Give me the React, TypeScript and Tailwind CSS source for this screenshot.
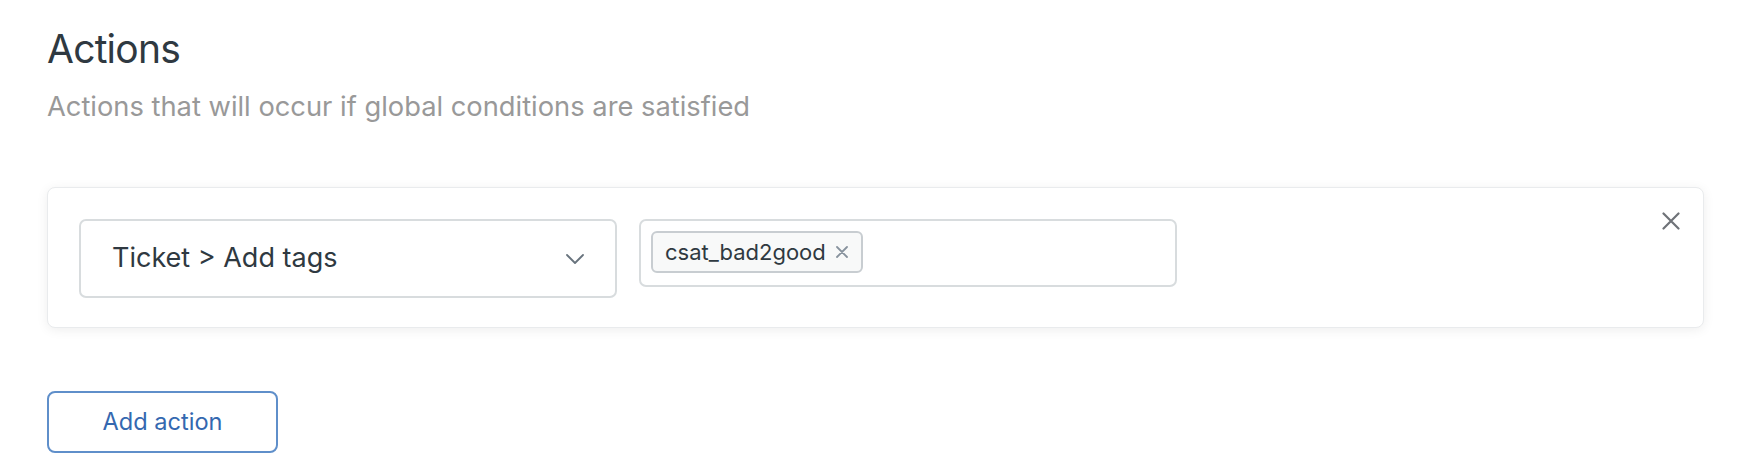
import React from "react";

export default function App() {
  return (
    <div
      className="w-[1740px] h-[476px] bg-white pl-[47px] pr-[36px] pt-[25px]"
      style={{ fontFamily: "Inter, 'Noto Sans', sans-serif" }}
    >
      <h1 className="text-[39px] leading-[48px] tracking-[-0.02em] text-[#2f3941] font-normal">Actions</h1>
      <p className="mt-[16px] text-[27.3px] leading-[36px] text-[#999999]">
        Actions that will occur if global conditions are satisfied
      </p>

      <div className="relative mt-[62px] h-[141px] rounded-[8px] border border-[#e9ebed] bg-white shadow-[0_2px_12px_rgba(0,0,0,0.07)] p-[31px] flex items-start gap-[22px]">
        <div className="w-[538px] h-[79px] rounded-[7px] border-2 border-[#d8dcde] flex items-center justify-between pl-[31px] pr-[31px]">
          <span className="text-[27px] text-[#2f3941]">Ticket &gt; Add tags</span>
          <svg width="18" height="10" viewBox="0 0 18 10" fill="none">
            <path d="M1 1l8 8 8-8" stroke="#68737d" strokeWidth="1.8" strokeLinecap="round" strokeLinejoin="round" />
          </svg>
        </div>
        <div className="w-[538px] h-[68px] rounded-[7px] border-2 border-[#d8dcde] pl-[10px] pt-[10px]">
          <div className="inline-flex items-center h-[42px] rounded-[6px] border-2 border-[#c8cdd1] bg-[#f8f9f9] pl-[12px] pr-[13px] gap-[10px]">
            <span className="text-[22px] text-[#2f3941]">csat_bad2good</span>
            <svg width="12" height="12" viewBox="0 0 12 12" fill="none">
              <path d="M1 1l10 10M11 1L1 11" stroke="#87929d" strokeWidth="1.8" strokeLinecap="round" />
            </svg>
          </div>
        </div>
        <button className="absolute right-[23px] top-[24px] w-[18px] h-[18px] flex items-center justify-center">
          <svg width="18" height="18" viewBox="0 0 18 18" fill="none">
            <path d="M1.5 1.5l15 15M16.5 1.5l-15 15" stroke="#6f7378" strokeWidth="2.2" strokeLinecap="round" />
          </svg>
        </button>
      </div>

      <button className="mt-[63px] w-[231px] h-[62px] rounded-[8px] border-2 border-[#5f8fca] bg-white text-[23.6px] text-[#3468b0] flex items-center justify-center">
        Add action
      </button>
    </div>
  );
}
